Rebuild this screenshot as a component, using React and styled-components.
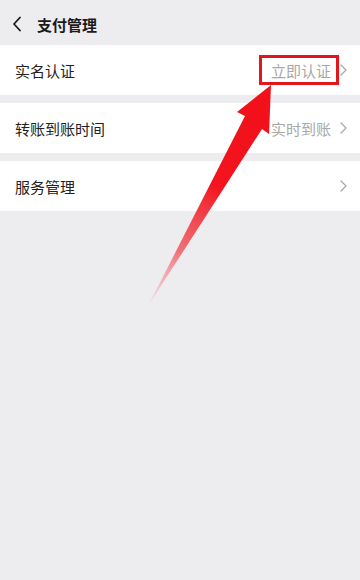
import React from "react";
import styled, { createGlobalStyle } from "styled-components";

const Global = createGlobalStyle`
  html, body { margin: 0; padding: 0; background: #ededf0; }
  body { font-family: "Noto Sans CJK SC", "Noto Sans", sans-serif; }
  #root { width: 360px; height: 580px; }
`;

const Page = styled.div`
  position: relative;
  width: 360px;
  height: 580px;
  background: #ededf0;
  overflow: hidden;
  display: flex;
  flex-direction: column;
`;

const Header = styled.div`
  height: 45px;
  display: flex;
  align-items: center;
  padding: 3px 0 0 12px;
  gap: 15px;
  box-sizing: border-box;
`;

const Title = styled.div`
  font-size: 15px;
  font-weight: 700;
  color: #1b1b1b;
  line-height: 1;
`;

const List = styled.div`
  display: flex;
  flex-direction: column;
  gap: 8px;
`;

const Row = styled.div`
  height: 50px;
  background: #ffffff;
  display: flex;
  align-items: center;
  justify-content: space-between;
  padding: 0 13px 0 15px;
  box-sizing: border-box;
`;

const Label = styled.span`
  font-size: 15px;
  color: #222222;
  line-height: 1;
`;

const Right = styled.div`
  display: flex;
  align-items: center;
`;

const Value = styled.span`
  font-size: 15px;
  color: #a8a8a8;
  line-height: 1;
  margin-right: ${(p) => (p.$boxed ? "1px" : "9px")};
  ${(p) =>
    p.$boxed &&
    `
    border: 3px solid #e3161d;
    padding: 5px 5px 4px 9px;
  `}
`;

const Overlay = styled.svg`
  position: absolute;
  left: 0;
  top: 0;
  pointer-events: none;
`;

const Chevron = ({ color = "#a9a9a9", w = 7, h = 12, sw = 1.3 }) => (
  <svg width={w} height={h} viewBox="0 0 7 12" fill="none">
    <path d="M1 1 L6 6 L1 11" stroke={color} strokeWidth={sw} strokeLinecap="round" strokeLinejoin="round" />
  </svg>
);

const Back = () => (
  <svg width="10" height="16" viewBox="0 0 10 16" fill="none">
    <path d="M8 1.5 L2 8 L8 14.5" stroke="#1b1b1b" strokeWidth="1.8" strokeLinecap="round" strokeLinejoin="round" />
  </svg>
);

const rows = [
  { label: "实名认证", value: "立即认证", boxed: true },
  { label: "转账到账时间", value: "实时到账" },
  { label: "服务管理" },
];

export default function App() {
  return (
    <>
      <Global />
      <Page>
        <Header>
          <Back />
          <Title>支付管理</Title>
        </Header>
        <List>
          {rows.map((r) => (
            <Row key={r.label}>
              <Label>{r.label}</Label>
              <Right>
                {r.value ? <Value $boxed={r.boxed}>{r.value}</Value> : null}
                <Chevron />
              </Right>
            </Row>
          ))}
        </List>
        <Overlay width="360" height="580" viewBox="0 0 360 580">
          <defs>
            <linearGradient id="arrowGrad" x1="270" y1="85" x2="148" y2="306" gradientUnits="userSpaceOnUse">
              <stop offset="0" stopColor="#f2101a" />
              <stop offset="0.45" stopColor="#f2141e" />
              <stop offset="0.75" stopColor="#f25a62" stopOpacity="0.85" />
              <stop offset="1" stopColor="#f4b6ba" stopOpacity="0.3" />
            </linearGradient>
          </defs>
          <polygon
            points="271,85 269,134 262,129 148,306 245,116 237,112"
            fill="url(#arrowGrad)"
          />
        </Overlay>
      </Page>
    </>
  );
}
